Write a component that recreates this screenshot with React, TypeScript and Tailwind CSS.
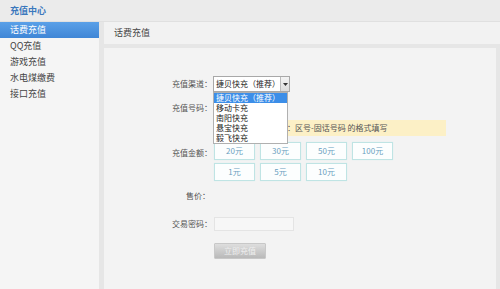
import { useState } from "react";

const menu = ["话费充值", "QQ充值", "游戏充值", "水电煤缴费", "接口充值"];
const channels = ["捷贝快充（推荐）", "移动卡充", "南阳快充", "悬宝快充", "毅飞快充"];
const amounts = ["20元", "30元", "50元", "100元", "1元", "5元", "10元"];

export default function App() {
    const [active] = useState(0);

    return (
        <div className="w-[500px] h-[289px] overflow-hidden flex flex-col bg-[#f4f4f4] text-[#333]" style={{ fontFamily: '"Noto Sans CJK SC", "Noto Sans", sans-serif' }}>
            <div className="h-[22px] shrink-0 bg-[#ebebeb] border-b border-[#e0e0e0] flex items-center pl-[10px]">
                <span className="text-[9px] font-bold text-[#3b78bd]">充值中心</span>
            </div>
            <div className="flex flex-1 min-h-0">
                {/* sidebar */}
                <div className="w-[99px] shrink-0 bg-[#f5f5f5] flex flex-col">
                    {menu.map((m, i) => (
                        <div key={m}
                            className={i === active
                                ? "h-[16px] flex items-center pl-[10px] text-[9px] text-white bg-gradient-to-b from-[#5aa0e8] to-[#3f86d6]"
                                : "h-[16px] flex items-center pl-[10px] text-[9px] text-[#444]"}>
                            {m}
                        </div>
                    ))}
                </div>
                {/* main */}
                <div className="flex-1 flex flex-col border-l-[5px] border-[#e6e6e6]">
                    <div className="h-[22px] shrink-0 bg-[#f2f2f2] flex items-center pl-[10px] text-[9px] text-[#444]">话费充值</div>
                    <div className="flex-1 border-t-[4px] border-r-[4px] border-[#e6e6e6] bg-[#f3f3f3] pt-[28px]">
                        {/* 充值渠道 */}
                        <div className="flex items-center h-[16px]">
                            <div className="w-[108px] text-right text-[8px] text-[#555]">充值渠道：</div>
                            <div className="relative ml-[1px]">
                                <div className="w-[77px] h-[16px] bg-white border border-[#a8a8a8] flex items-center">
                                    <span className="flex-1 pl-[2px] text-[8px] text-[#222] whitespace-nowrap">捷贝快充（推荐）</span>
                                    <div className="w-[9px] h-[14px] border-l border-[#bbb] bg-gradient-to-b from-[#f4f4f4] to-[#dcdcdc] flex items-center justify-center">
                                        <svg width="5" height="3" viewBox="0 0 5 3"><path d="M0 0h5L2.5 3z" fill="#333" /></svg>
                                    </div>
                                </div>
                                <div className="absolute left-0 top-[16px] w-[75px] bg-white border border-[#b0b0b0] z-10 flex flex-col">
                                    {channels.map((c, i) => (
                                        <div key={c} className={i === 0
                                            ? "h-[10px] leading-[10px] pl-[2px] text-[8px] text-white bg-[#3c8ee8] whitespace-nowrap"
                                            : "h-[10px] leading-[10px] pl-[2px] text-[8px] text-[#222] whitespace-nowrap"}>{c}</div>
                                    ))}
                                </div>
                            </div>
                        </div>
                        {/* 充值号码 */}
                        <div className="flex items-center h-[16px] mt-[8px]">
                            <div className="w-[108px] text-right text-[8px] text-[#555]">充值号码：</div>
                            <input className="ml-[1px] w-[74px] h-[15px] bg-white border border-[#ddd]" />
                        </div>
                        <div className="flex h-[16px] mt-[4px]">
                            <div className="w-[109px]"></div>
                            <div className="w-[233px] bg-[#fcf0c6] flex items-center pl-[74px] text-[8px] text-[#555] whitespace-nowrap">：区号-固话号码 的格式填写</div>
                        </div>
                        {/* 充值金额 */}
                        <div className="flex items-start mt-[6px]">
                            <div className="w-[108px] h-[18px] flex items-center justify-end text-[8px] text-[#555] mt-[2px]">充值金额：</div>
                            <div className="ml-[2px] grid grid-cols-[41px_41px_41px_41px] gap-x-[5px] gap-y-[3px]">
                                {amounts.map((a) => (
                                    <div key={a} className="h-[18px] bg-[#fcfefe] border border-[#bfe4e4] shadow-[0_0_1px_#d4eeee] flex items-center justify-center text-[8px] text-[#6b9fc0]">{a}</div>
                                ))}
                            </div>
                        </div>
                        {/* 售价 */}
                        <div className="flex items-center h-[16px] mt-[7px]">
                            <div className="w-[106px] text-right text-[8px] text-[#555]">售价：</div>
                        </div>
                        {/* 交易密码 */}
                        <div className="flex items-center h-[16px] mt-[12px]">
                            <div className="w-[108px] text-right text-[8px] text-[#555]">交易密码：</div>
                            <div className="ml-[2px] w-[80px] h-[14px] bg-[#f7f7f7] border border-[#e4e4e4]"></div>
                        </div>
                        {/* submit */}
                        <div className="flex h-[16px] mt-[11px]">
                            <div className="w-[110px]"></div>
                            <button className="w-[52px] h-[16px] bg-gradient-to-b from-[#dedede] to-[#b9b9b9] border border-[#c8c8c8] rounded-[1px] text-[8px] text-[#eeeeee] flex items-center justify-center">立即充值</button>
                        </div>
                    </div>
                </div>
            </div>
        </div>
    );
}
